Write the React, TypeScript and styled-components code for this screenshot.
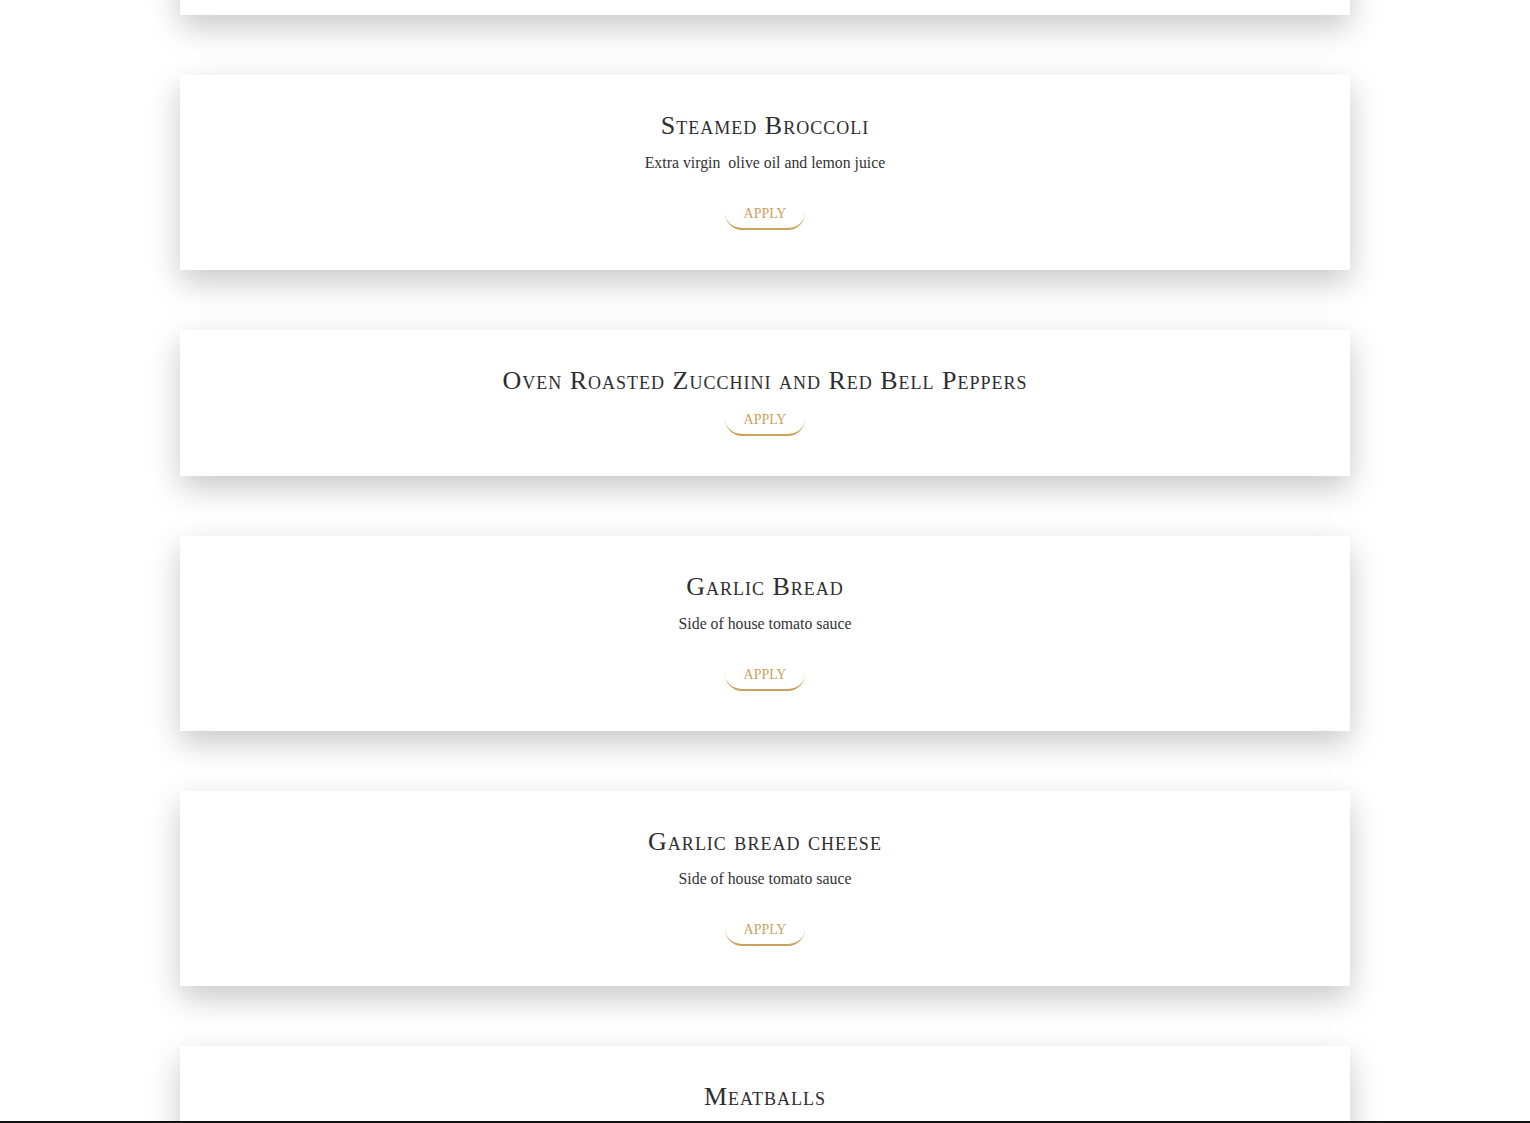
import React from "react";
import styled, { createGlobalStyle } from "styled-components";

const GlobalStyle = createGlobalStyle`
  html, body {
    margin: 0;
    padding: 0;
    background: #ffffff;
    overflow: hidden;
  }
  body {
    font-family: "Liberation Serif", serif;
  }
`;

const Page = styled.main`
  width: 100%;
  min-height: 1123px;
  display: flex;
  justify-content: center;
`;

const List = styled.section`
  width: 1170px;
  display: flex;
  flex-direction: column;
  gap: 60px;
  margin-top: -180px;
`;

const Card = styled.article`
  background: #ffffff;
  box-shadow: 0 12px 30px rgba(0, 0, 0, 0.22);
  padding: 35px 20px 40px;
  display: flex;
  flex-direction: column;
  align-items: center;
  text-align: center;
`;

const Title = styled.h3`
  margin: 0;
  font-family: "Liberation Serif", serif;
  font-variant: small-caps;
  font-weight: 400;
  font-size: 26px;
  line-height: 32px;
  letter-spacing: 1px;
  color: #2e2e2e;
`;

const Description = styled.p`
  margin: 9px 0 16px;
  font-family: "Liberation Serif", serif;
  font-size: 15.8px;
  line-height: 24px;
  color: #333333;
  white-space: pre-wrap;
`;

const ApplyButton = styled.button`
  margin-top: 5px;
  width: 80px;
  height: 34px;
  padding: 3px 0 0;
  background: #ffffff;
  border: none;
  border-bottom: 2px solid #c9a35e;
  border-radius: 17px;
  font-family: "Liberation Serif", serif;
  font-size: 14px;
  text-transform: uppercase;
  color: #c9a35e;
  cursor: pointer;
`;

const BottomRule = styled.div`
  position: fixed;
  left: 0;
  right: 0;
  bottom: 0;
  height: 2px;
  background: #111111;
`;

type Item = { title: string; description?: string };

const items: Item[] = [
  { title: "Caprese Salad", description: "Fresh mozzarella, tomato and basil" },
  { title: "Steamed Broccoli", description: "Extra virgin  olive oil and lemon juice" },
  { title: "Oven Roasted Zucchini and Red Bell Peppers" },
  { title: "Garlic Bread", description: "Side of house tomato sauce" },
  { title: "Garlic bread cheese", description: "Side of house tomato sauce" },
  { title: "Meatballs", description: "Homemade with marinara sauce" },
];

export default function App() {
  return (
    <>
      <GlobalStyle />
      <Page>
        <List>
          {items.map((item) => (
            <Card key={item.title}>
              <Title>{item.title}</Title>
              {item.description && <Description>{item.description}</Description>}
              <ApplyButton type="button">Apply</ApplyButton>
            </Card>
          ))}
        </List>
      </Page>
      <BottomRule />
    </>
  );
}
